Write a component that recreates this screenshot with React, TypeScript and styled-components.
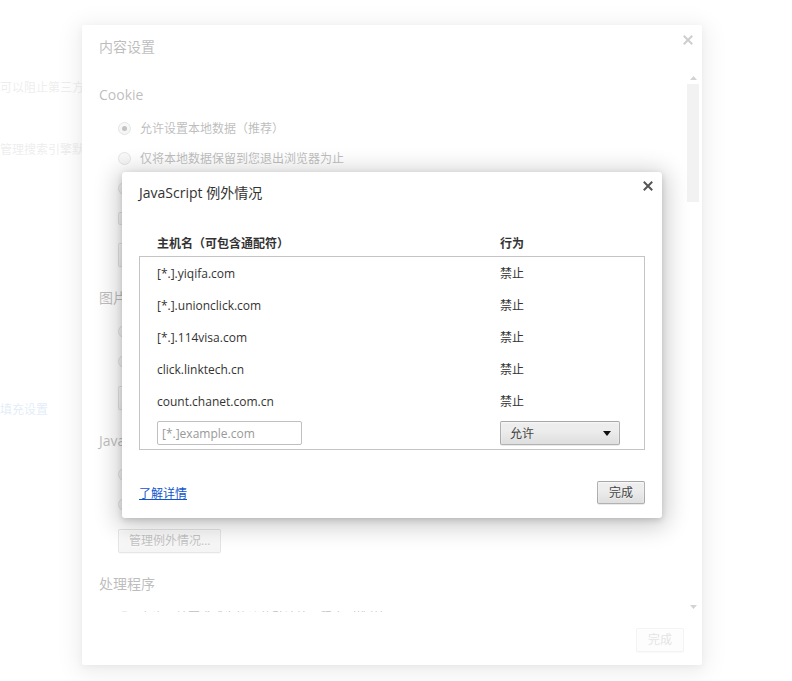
import React from 'react'
import styled, { createGlobalStyle } from 'styled-components'

const GlobalStyle = createGlobalStyle`
  html, body {
    margin: 0;
    padding: 0;
    background: #fff;
  }
  body {
    font-family: "Open Sans", "Noto Sans CJK SC", sans-serif;
    font-size: 12px;
    color: #333;
  }
`

const exceptions = [
  { host: '[*.].yiqifa.com', action: '禁止' },
  { host: '[*.].unionclick.com', action: '禁止' },
  { host: '[*.].114visa.com', action: '禁止' },
  { host: 'click.linktech.cn', action: '禁止' },
  { host: 'count.chanet.com.cn', action: '禁止' },
]

type Option = { kind: 'radio' | 'check'; label: string; checked?: boolean }

const sections: { title: string; options: Option[]; buttons: string[] }[] = [
  {
    title: 'Cookie',
    options: [
      { kind: 'radio', label: '允许设置本地数据（推荐）', checked: true },
      { kind: 'radio', label: '仅将本地数据保留到您退出浏览器为止' },
      { kind: 'radio', label: '阻止网站设置任何数据' },
      { kind: 'check', label: '阻止第三方 Cookie 和网站数据' },
    ],
    buttons: ['管理例外情况...', '所有 Cookie 和网站数据...'],
  },
  {
    title: '图片',
    options: [
      { kind: 'radio', label: '显示所有图片（推荐）', checked: true },
      { kind: 'radio', label: '不显示任何图片' },
    ],
    buttons: ['管理例外情况...'],
  },
  {
    title: 'JavaScript',
    options: [
      { kind: 'radio', label: '允许所有网站运行 JavaScript（推荐）', checked: true },
      { kind: 'radio', label: '不允许任何网站运行 JavaScript' },
    ],
    buttons: ['管理例外情况...'],
  },
  {
    title: '处理程序',
    options: [{ kind: 'radio', label: '允许网站要求成为协议的默认处理程序（推荐）', checked: true }],
    buttons: [],
  },
]

function CloseIcon({ color }: { color: string }) {
  return (
    <svg width="10" height="10" viewBox="0 0 10 10">
      <path d="M1.5 1.5 L8.5 8.5 M8.5 1.5 L1.5 8.5" stroke={color} strokeWidth="2" strokeLinecap="square" />
    </svg>
  )
}

export default function App() {
  return (
    <Page>
      <GlobalStyle />
      <Backdrop>
        <BackLine $top={80}>可以阻止第三方</BackLine>
        <BackLine $top={46}>管理搜索引擎默</BackLine>
        <BackLine $top={244} $link>填充设置</BackLine>
      </Backdrop>

      <Layer>
        <OuterDialog>
          <OuterHeader>
            <OuterTitle>内容设置</OuterTitle>
            <OuterClose>
              <CloseIcon color="#666" />
            </OuterClose>
          </OuterHeader>
          <OuterBody>
            <ScrollContent>
              {sections.map((s) => (
                <Section key={s.title}>
                  <SectionTitle>{s.title}</SectionTitle>
                  <Options>
                    {s.options.map((o) => (
                      <OptionRow key={o.label}>
                        {o.kind === 'radio' ? <Radio $checked={o.checked} /> : <Check />}
                        <span>{o.label}</span>
                      </OptionRow>
                    ))}
                    {s.buttons.length > 0 && (
                      <ButtonRow>
                        {s.buttons.map((b) => (
                          <Button key={b} $wide>
                            {b}
                          </Button>
                        ))}
                      </ButtonRow>
                    )}
                  </Options>
                </Section>
              ))}
            </ScrollContent>
            <Scrollbar>
              <ScrollArrow>
                <svg width="7" height="4" viewBox="0 0 7 4">
                  <polygon points="0,4 3.5,0 7,4" fill="#777" />
                </svg>
              </ScrollArrow>
              <Thumb />
              <ScrollSpacer />
              <ScrollArrow>
                <svg width="7" height="4" viewBox="0 0 7 4">
                  <polygon points="0,0 7,0 3.5,4" fill="#777" />
                </svg>
              </ScrollArrow>
            </Scrollbar>
          </OuterBody>
          <OuterFooter>
            <Button $disabled>完成</Button>
          </OuterFooter>
        </OuterDialog>
      </Layer>

      <Scrim />

      <Layer>
        <Dialog>
          <DialogHeader>
            <DialogTitle>JavaScript 例外情况</DialogTitle>
            <DialogClose>
              <CloseIcon color="#555" />
            </DialogClose>
          </DialogHeader>
          <DialogContent>
            <ColumnHeads>
              <span>主机名（可包含通配符）</span>
              <span>行为</span>
            </ColumnHeads>
            <List>
              {exceptions.map((e) => (
                <ListRow key={e.host}>
                  <span>{e.host}</span>
                  <span>{e.action}</span>
                </ListRow>
              ))}
              <ListRow>
                <HostInput placeholder="[*.]example.com" />
                <Select>
                  <span>允许</span>
                  <svg width="8" height="5" viewBox="0 0 8 5">
                    <polygon points="0,0 8,0 4,5" fill="#111" />
                  </svg>
                </Select>
              </ListRow>
            </List>
          </DialogContent>
          <DialogFooter>
            <Link href="#">了解详情</Link>
            <Button>完成</Button>
          </DialogFooter>
        </Dialog>
      </Layer>
    </Page>
  )
}

const Page = styled.div`
  position: relative;
  width: 792px;
  height: 681px;
  overflow: hidden;
  background: #fff;
`

const Backdrop = styled.div`
  display: flex;
  flex-direction: column;
  font-size: 12px;
  line-height: 16px;
`

const BackLine = styled.div<{ $top: number; $link?: boolean }>`
  margin-top: ${(p) => p.$top}px;
  white-space: nowrap;
  color: ${(p) => (p.$link ? '#a9c4ea' : '#c8c8c8')};
`

const Layer = styled.div`
  position: absolute;
  inset: 0;
  display: flex;
  align-items: center;
  justify-content: center;
  padding: 9px 8px 0 0;
`

const Scrim = styled.div`
  position: absolute;
  inset: 0;
  background: rgba(255, 255, 255, 0.68);
`

const OuterDialog = styled.div`
  width: 620px;
  height: 640px;
  background: #fff;
  border-radius: 2px;
  box-shadow: 0 4px 23px 5px rgba(0, 0, 0, 0.2), 0 2px 6px rgba(0, 0, 0, 0.15);
  display: flex;
  flex-direction: column;
  position: relative;
`

const OuterHeader = styled.div`
  height: 47px;
  box-sizing: border-box;
  padding: 12px 17px 0;
`

const OuterTitle = styled.div`
  font-size: 14px;
  line-height: 20px;
  color: #333;
`

const OuterClose = styled.div`
  position: absolute;
  top: 10px;
  right: 9px;
  display: flex;
`

const OuterBody = styled.div`
  height: 540px;
  display: flex;
  overflow: hidden;
`

const ScrollContent = styled.div`
  flex: 1;
  padding: 13px 0 0 17px;
`

const Section = styled.div`
  display: flex;
  flex-direction: column;
  margin-bottom: 21px;
`

const SectionTitle = styled.div`
  font-size: 14px;
  line-height: 20px;
  color: #333;
  margin-bottom: 8px;
`

const Options = styled.div`
  display: flex;
  flex-direction: column;
  padding-left: 19px;
`

const OptionRow = styled.div`
  height: 30px;
  display: flex;
  align-items: center;
  gap: 9px;
  font-size: 12px;
  color: #333;
`

const Radio = styled.span<{ $checked?: boolean }>`
  width: 13px;
  height: 13px;
  box-sizing: border-box;
  border-radius: 50%;
  border: 1px solid #aaa;
  background: linear-gradient(#ededed, #dedede);
  display: flex;
  align-items: center;
  justify-content: center;
  flex-shrink: 0;
  &::after {
    content: '';
    width: 5px;
    height: 5px;
    border-radius: 50%;
    background: ${(p) => (p.$checked ? '#444' : 'transparent')};
  }
`

const Check = styled.span`
  width: 13px;
  height: 13px;
  box-sizing: border-box;
  border-radius: 2px;
  border: 1px solid #aaa;
  background: linear-gradient(#ededed, #dedede);
  flex-shrink: 0;
`

const ButtonRow = styled.div`
  display: flex;
  gap: 8px;
  margin-top: 10px;
`

const Button = styled.button<{ $wide?: boolean; $disabled?: boolean }>`
  height: ${(p) => (p.$wide ? '24px' : '23px')};
  min-width: 48px;
  box-sizing: border-box;
  padding: 0 ${(p) => (p.$wide ? '10px' : '8px')};
  border: 1px solid rgba(0, 0, 0, ${(p) => (p.$disabled ? 0.12 : 0.25)});
  border-radius: 2px;
  background: ${(p) =>
    p.$disabled ? '#f8f8f8' : 'linear-gradient(#ededed, #ededed 38%, #dedede)'};
  box-shadow: 0 1px 0 rgba(0, 0, 0, 0.08), inset 0 1px 2px rgba(255, 255, 255, 0.75);
  color: ${(p) => (p.$disabled ? '#aaa' : '#444')};
  text-shadow: 0 1px 0 #f0f0f0;
  font-family: inherit;
  font-size: 12px;
  line-height: 1;
  cursor: default;
`

const Scrollbar = styled.div`
  width: 12px;
  margin-right: 3px;
  display: flex;
  flex-direction: column;
  align-items: stretch;
`

const ScrollArrow = styled.div`
  height: 11px;
  display: flex;
  align-items: center;
  justify-content: center;
`

const Thumb = styled.div`
  height: 118px;
  margin-top: 1px;
  background: #d6d6d6;
`

const ScrollSpacer = styled.div`
  flex: 1;
`

const OuterFooter = styled.div`
  flex: 1;
  display: flex;
  justify-content: flex-end;
  align-items: flex-start;
  padding: 16px 18px 0;
  & > button {
    height: 24px;
  }
`

const Dialog = styled.div`
  width: 540px;
  background: #fff;
  border-radius: 3px;
  box-shadow: 0 4px 23px 5px rgba(0, 0, 0, 0.2), 0 2px 6px rgba(0, 0, 0, 0.15);
  display: flex;
  flex-direction: column;
  position: relative;
`

const DialogHeader = styled.div`
  padding: 12px 17px 0;
`

const DialogTitle = styled.div`
  font-size: 14px;
  line-height: 18px;
  color: #333;
`

const DialogClose = styled.div`
  position: absolute;
  top: 9px;
  right: 9px;
  display: flex;
`

const DialogContent = styled.div`
  padding: 34px 17px 0;
`

const ColumnHeads = styled.div`
  display: grid;
  grid-template-columns: 343px 1fr;
  padding-left: 18px;
  height: 16px;
  line-height: 16px;
  margin-bottom: 4px;
  font-weight: 700;
  font-size: 12px;
  color: #333;
`

const List = styled.div`
  border: 1px solid #c4c4c4;
  display: flex;
  flex-direction: column;
`

const ListRow = styled.div`
  display: grid;
  grid-template-columns: 343px 1fr;
  align-items: center;
  height: 32px;
  padding-left: 17px;
  font-size: 12px;
  color: #333;
`

const HostInput = styled.input`
  width: 145px;
  height: 24px;
  box-sizing: border-box;
  border: 1px solid #bfbfbf;
  border-radius: 2px;
  padding: 0 4px;
  font-family: inherit;
  font-size: 12px;
  color: #333;
  outline: none;
  &::placeholder {
    color: #999;
  }
`

const Select = styled.div`
  width: 120px;
  height: 24px;
  box-sizing: border-box;
  border: 1px solid rgba(0, 0, 0, 0.25);
  border-radius: 2px;
  background: linear-gradient(#ededed, #ededed 38%, #dedede);
  box-shadow: 0 1px 0 rgba(0, 0, 0, 0.08), inset 0 1px 2px rgba(255, 255, 255, 0.75);
  display: flex;
  align-items: center;
  justify-content: space-between;
  padding: 0 8px 0 9px;
  color: #444;
  font-size: 12px;
`

const DialogFooter = styled.div`
  display: flex;
  justify-content: space-between;
  align-items: center;
  padding: 31px 17px 14px;
`

const Link = styled.a`
  color: #15c;
  text-decoration: underline;
  font-size: 12px;
`
